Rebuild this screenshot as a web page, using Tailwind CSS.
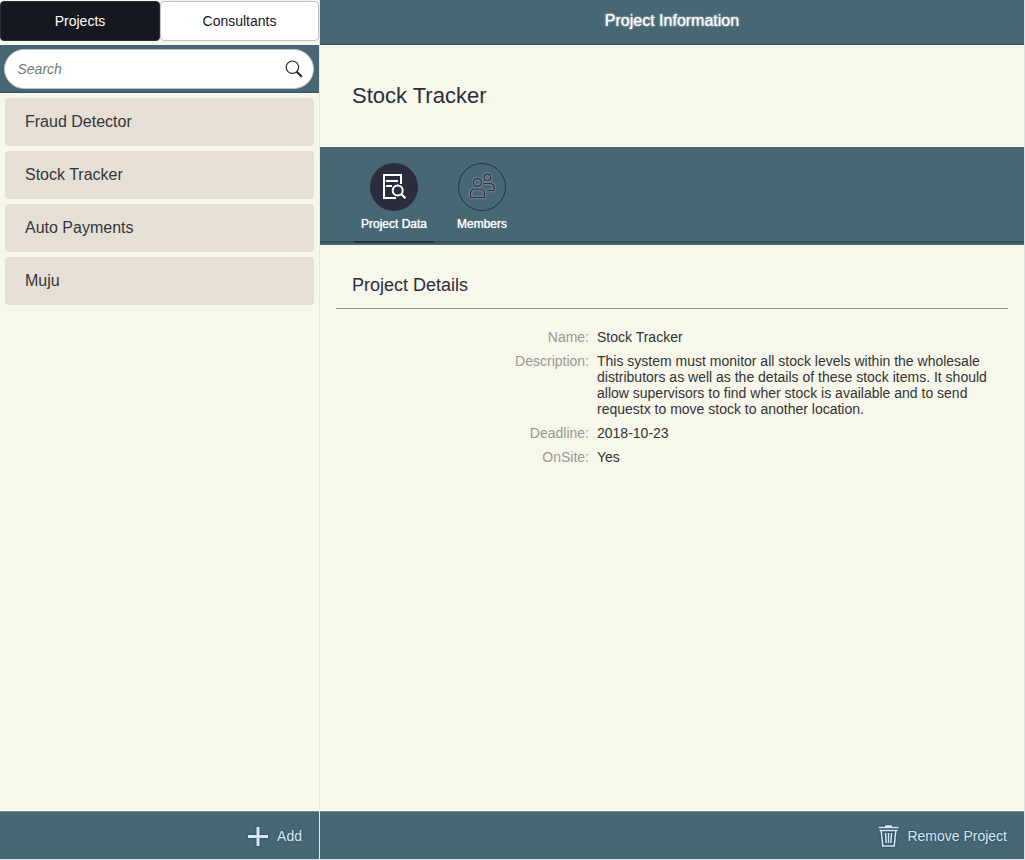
<!DOCTYPE html>
<html lang="en">
<head>
<meta charset="utf-8">
<title>Project Information</title>
<script src="https://cdn.jsdelivr.net/npm/@tailwindcss/browser@4"></script>
</head>
<body class="flex h-[860px] w-[1025px] overflow-hidden border-r border-b border-[#dcdfe3] bg-[#f8f7eb] font-['Liberation_Sans',Arial,sans-serif] text-sm text-[#32363a]">
<aside class="flex w-80 shrink-0 flex-col border-r border-[#ebe9cf]">
  <div class="flex h-[45px] shrink-0 pt-px">
    <button class="h-10 w-40 rounded border border-[#2b2d3f] bg-[#15181f] pb-px text-sm text-white">Projects</button>
    <button class="h-10 w-[159px] rounded border border-[#bfbfbf] bg-white pb-px text-sm text-[#16181f]">Consultants</button>
  </div>
  <div class="h-12 shrink-0 border-b border-[#355263] bg-[#466773] px-1 pt-1">
    <label class="flex h-10 w-[310px] items-center justify-between rounded-full border border-[#bfbfbf] bg-white pr-[10px] pl-[12.500px]">
      <input class="w-48 text-sm italic outline-none placeholder:text-[#74777a]" placeholder="Search">
      <svg class="size-[18px]" viewBox="0 0 18 18" fill="none" stroke="#222"><circle cx="7.400" cy="7.200" r="6.200" stroke-width="1.1"/><path d="M11.700 11.700 16.800 16.800" stroke-width="2"/></svg>
    </label>
  </div>
  <ul class="flex flex-1 flex-col gap-[5px] px-[5px] pt-[5px] text-base">
    <li class="flex h-12 w-[309px] items-center rounded border-b border-[#e5e0e0] bg-[#e6dfd6] pl-5">Fraud Detector</li>
    <li class="flex h-12 w-[309px] items-center rounded border-b border-[#e5e0e0] bg-[#e6dfd6] pl-5">Stock Tracker</li>
    <li class="flex h-12 w-[309px] items-center rounded border-b border-[#e5e0e0] bg-[#e6dfd6] pl-5">Auto Payments</li>
    <li class="flex h-12 w-[309px] items-center rounded border-b border-[#e5e0e0] bg-[#e6dfd6] pl-5">Muju</li>
  </ul>
  <footer class="flex h-12 shrink-0 items-center justify-end border-t border-[#6f9098] bg-[#466773] pr-[17px] text-[#d5eafa] [text-shadow:0_0_2px_#263b45]">
    <svg class="mr-2 size-[22px] drop-shadow-[0_0_1px_#263b45]" viewBox="0 0 22 22" fill="none" stroke="#d1e8ff" stroke-width="3"><path d="M1 11.5h20M11 2v19"/></svg>
    <span>Add</span>
  </footer>
</aside>
<main class="flex min-w-0 flex-1 flex-col">
  <header class="flex h-[45px] shrink-0 items-center justify-center border-b border-[#355263] bg-[#466773] pb-[3px] text-base text-white [text-shadow:0_0_2px_#fff]">Project Information</header>
  <h1 class="flex h-[102px] shrink-0 items-center pb-px pl-8 text-[22px] text-[#2b2d3f]">Stock Tracker</h1>
  <nav class="flex h-[98px] shrink-0 gap-[15px] border-b-2 border-[#466773] bg-[#466773] bg-[linear-gradient(to_top,#3a5059_2px,transparent_2px)] pl-[34px] text-xs text-white [text-shadow:0_0_1px_#fff]">
    <div class="flex w-20 flex-col items-center bg-[linear-gradient(#2b2d3f,#2b2d3f)] bg-[length:80px_2px] bg-bottom bg-no-repeat pt-4">
      <span class="flex size-12 items-center justify-center rounded-full bg-[#2b2d3f]">
        <svg class="size-7" viewBox="0 0 28 28" fill="none" stroke="white" stroke-width="2"><path d="M21 11V2H4v23h12M6 8h12M6 13h6"/><circle cx="17.700" cy="17.500" r="5"/><path d="m21.400 21.200 4 4"/></svg>
      </span>
      <span class="mt-[5px]">Project Data</span>
    </div>
    <div class="flex w-[66px] flex-col items-center pt-4">
      <span class="flex size-12 items-center justify-center rounded-full border border-[#2b2d3f]">
        <svg class="size-7 drop-shadow-[0_0_1px_#c5d0d4]" viewBox="0 0 28 28" fill="none" stroke="#2b2d3f" stroke-width="1.2"><circle cx="9.400" cy="9.500" r="3.900"/><path d="M2.500 24.500V21q0-5 5-5h4q5 0 5 5v3.500z"/><circle cx="19.400" cy="4.300" r="3.200"/><path d="M15.500 10.500h6q4.500 0 4.500 4.500v2.500h-6.500"/></svg>
      </span>
      <span class="mt-[5px]">Members</span>
    </div>
  </nav>
  <section class="flex-1 px-4">
    <h2 class="h-16 border-b border-[#a39469] pt-[26px] pl-4 text-lg text-[#2b2d3f]">Project Details</h2>
    <dl class="grid grid-cols-[253px_400px] gap-x-2 gap-y-2 pt-5 leading-4 text-[#333]">
      <dt class="text-right text-[#999993]">Name:</dt><dd>Stock Tracker</dd>
      <dt class="text-right text-[#999993]">Description:</dt>
      <dd>This system must monitor all stock levels within the wholesale<br>distributors as well as the details of these stock items. It should<br>allow supervisors to find wher stock is available and to send<br>requestx to move stock to another location.</dd>
      <dt class="text-right text-[#999993]">Deadline:</dt><dd>2018-10-23</dd>
      <dt class="text-right text-[#999993]">OnSite:</dt><dd>Yes</dd>
    </dl>
  </section>
  <footer class="flex h-12 shrink-0 items-center justify-end border-t border-[#6f9098] bg-[#466773] pr-[17px] text-[#d5eafa] [text-shadow:0_0_2px_#263b45]">
    <svg class="mr-2 h-[23px] w-[21px] drop-shadow-[0_0_1px_#263b45]" viewBox="0 0 21 23" fill="none" stroke="#d1e8ff" stroke-width="1.5"><path d="M.5 3.500h20M7 2h7M1.500 6.500h18M3.200 7l1.600 15h11.400L17.800 7M7.500 9l.7 10M10.500 9v10M13.500 9l-.7 10"/></svg>
    <span>Remove Project</span>
  </footer>
</main>
</body>
</html>
